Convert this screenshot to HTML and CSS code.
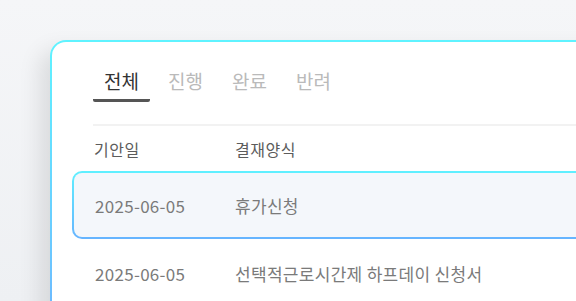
FILE: index.html
```html
<!DOCTYPE html>
<html>
<head>
    <title>결재 목록</title>
    <link rel="stylesheet" href="styles.css">
</head>
<body>
    <div class="card">
        <div class="tabs">
            <span class="tab active">전체</span>
            <span class="tab">진행</span>
            <span class="tab">완료</span>
            <span class="tab">반려</span>
        </div>
        <div class="divider"></div>
        <div class="head-row">
            <span class="col-date">기안일</span>
            <span class="col-form">결재양식</span>
        </div>
        <div class="row selected">
            <span class="col-date">2025-06-05</span>
            <span class="col-form">휴가신청</span>
        </div>
        <div class="row">
            <span class="col-date">2025-06-05</span>
            <span class="col-form">선택적근로시간제 하프데이 신청서</span>
        </div>
    </div>
</body>
</html>
```
FILE: styles.css
```css
body {
    margin: 0;
    height: 301px;
    overflow: hidden;
    font-family: "Noto Sans CJK KR", "Noto Sans", sans-serif;
    background: linear-gradient(180deg, #f5f6f8 0%, #eef0f3 100%);
}
.card {
    margin: 40px 0 0 50px;
    width: 620px;
    height: 300px;
    padding: 26px 0 0 41px;
    border: 2px solid transparent;
    border-radius: 16px;
    background:
        linear-gradient(#ffffff, #ffffff) padding-box,
        linear-gradient(180deg, #5ff3ff 0%, #6cc4ff 70%, #6aa6ff 100%) border-box;
    box-shadow: -10px 10px 22px rgba(0, 0, 0, 0.1);
}
.tabs {
    display: flex;
    gap: 7px;
}
.tab {
    font-size: 19px;
    line-height: 25px;
    padding: 0 11px 6px 11px;
    border-bottom: 3px solid transparent;
    color: #bababa;
}
.tab.active {
    color: #333333;
    border-bottom-color: #555555;
    border-radius: 0 0 2px 2px;
}
.divider {
    height: 2px;
    background-color: #f2f2f2;
    margin-top: 22px;
}
.head-row {
    display: flex;
    margin: 12px 0 11px 0;
    padding-left: 1px;
    font-size: 16px;
    letter-spacing: 0.5px;
    line-height: 22px;
    color: #5c5c5c;
}
.col-date {
    width: 141px;
    flex-shrink: 0;
}
.row {
    display: flex;
    align-items: center;
    height: 64px;
    margin: 0 0 0 -21px;
    padding: 0 0 0 21px;
    border: 2px solid transparent;
    border-radius: 10px;
    font-size: 17px;
    letter-spacing: 0.3px;
    color: #7a7a7a;
}
.row .col-date {
    width: 140px;
}
.row.selected {
    background:
        linear-gradient(#f4f7fb, #f4f7fb) padding-box,
        linear-gradient(180deg, #5ff0ff 0%, #66b4ff 100%) border-box;
}
```
